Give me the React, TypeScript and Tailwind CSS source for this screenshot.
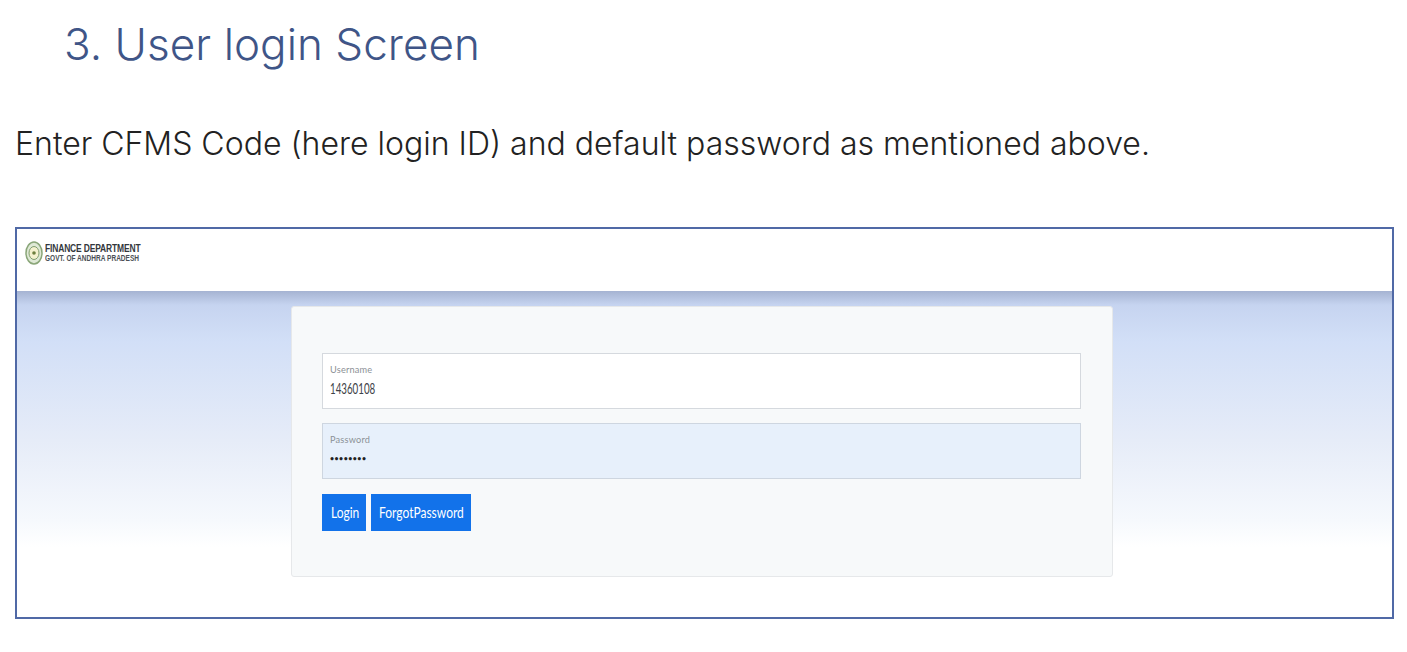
export default function App() {
  return (
    <div className="w-[1407px] h-[652px] overflow-hidden bg-white font-['Lato',sans-serif]">
      <h1 className="ml-[64px] pt-[17px] h-[70px] font-['Inter',sans-serif] text-[44px] leading-[54px] font-light tracking-[0.05px] text-[#3f5587]">3. User login Screen</h1>
      <p className="ml-[15px] mt-[53px] h-[40px] font-['Inter',sans-serif] text-[32px] leading-[42px] font-light tracking-[0px] text-[#222222] whitespace-nowrap">Enter CFMS Code (here login ID) and default password as mentioned above.</p>
      <div className="ml-[15px] mt-[64px] w-[1379px] h-[392px] border-2 border-[#5069a6] bg-white">
        <header className="h-[62px] flex items-start pl-[8px] pt-[12px] gap-[2px]">
          <svg width="18" height="26" viewBox="0 0 18 26" className="mt-[-1px]">
            <ellipse cx="9" cy="13" rx="8" ry="11" fill="#dfe9d6" stroke="#8aa679" strokeWidth="1.5" />
            <ellipse cx="9" cy="13" rx="5" ry="6.5" fill="#f4f1cf" stroke="#7f9d6e" />
            <circle cx="9" cy="13" r="1.8" fill="#6d7f3e" />
          </svg>
          <div className="font-['Liberation_Sans',sans-serif] font-bold text-[#33373c] origin-left scale-x-[0.77] mt-[2px]">
            <div className="text-[11px] leading-[11px] tracking-[-0.2px] whitespace-nowrap">FINANCE DEPARTMENT</div>
            <div className="text-[8.5px] leading-[9px] text-[#4b5056] whitespace-nowrap">GOVT. OF ANDHRA PRADESH</div>
          </div>
        </header>
        <main className="h-[326px] pt-[15px] bg-[linear-gradient(to_bottom,#a5b3d2_0px,#c6d4f0_14px,#d2dff7_50px,#e6ecf8_150px,#f6f9fd_230px,#ffffff_256px)]">
          <div className="ml-[274px] w-[822px] h-[271px] bg-[#f7f9fa] border border-[#e6e8ea] rounded-[3px] pt-[46px] pl-[30px]">
            <div className="w-[759px] h-[56px] border border-[#d5d9de] bg-white pl-[7px] pt-[9px]">
              <div className="text-[10px] leading-[12px] text-[#8b9096] tracking-[0.2px] origin-left scale-x-[0.92]">Username</div>
              <div className="text-[15px] leading-[24px] text-[#3d4247] origin-left scale-x-[0.65] mt-[1px]">14360108</div>
            </div>
            <div className="mt-[14px] w-[759px] h-[56px] border border-[#ced6e0] bg-[#e7f0fb] pl-[7px] pt-[9px]">
              <div className="text-[10px] leading-[12px] text-[#8b9096] tracking-[0.2px] origin-left scale-x-[0.92]">Password</div>
              <div className="text-[7px] leading-[24px] text-[#222] tracking-[0.5px] font-bold mt-[1px]">••••••••</div>
            </div>
            <div className="mt-[15px] flex gap-[5px]">
              <button className="w-[44px] h-[37px] flex items-center pl-[9px] bg-[#1272ea] text-white text-[15px]"><span className="inline-block origin-left scale-x-[0.8]">Login</span></button>
              <button className="w-[100px] h-[37px] flex items-center pl-[8px] bg-[#1272ea] text-white text-[15px] whitespace-nowrap"><span className="inline-block origin-left scale-x-[0.8]">ForgotPassword</span></button>
            </div>
          </div>
        </main>
      </div>
    </div>
  );
}
